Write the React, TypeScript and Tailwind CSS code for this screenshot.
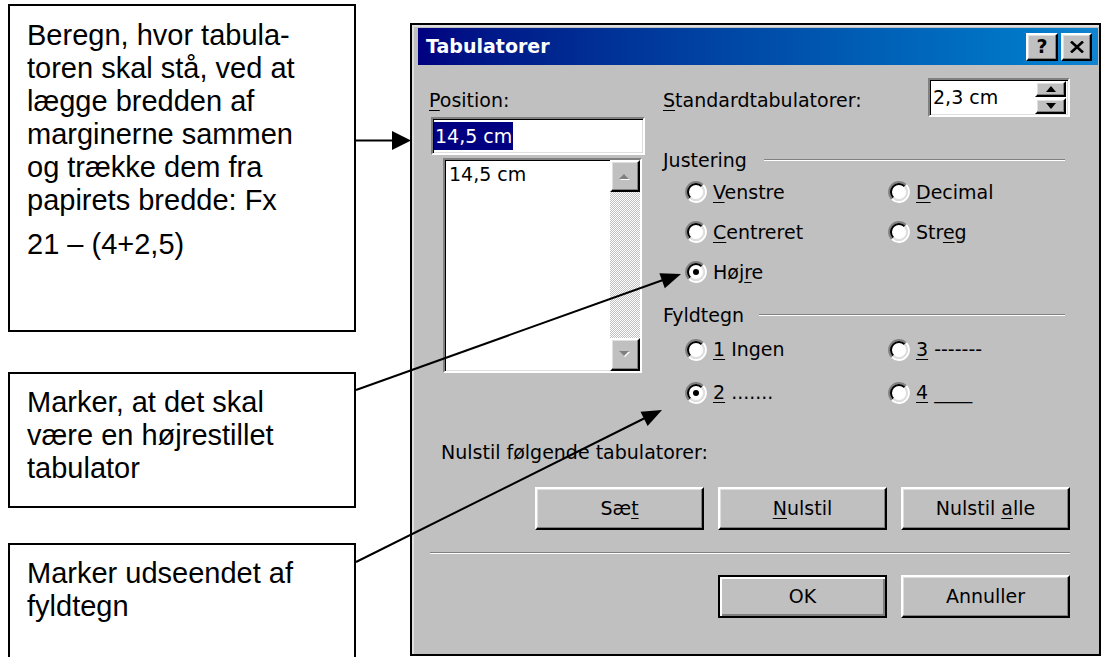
import React from 'react';

const raised =
  'border-2 border-t-white border-l-white border-r-black border-b-black bg-[#c0c0c0] shadow-[inset_-1px_-1px_#808080,inset_1px_1px_#dfdfdf]';
const sunken =
  'border-2 border-t-[#808080] border-l-[#808080] border-r-white border-b-white shadow-[inset_1px_1px_#000,inset_-1px_-1px_#dfdfdf]';

function Radio({ checked }: { checked?: boolean }) {
  return (
    <svg width="22" height="22" viewBox="0 0 22 22" className="shrink-0">
      <circle cx="11" cy="11" r="8" fill="#fff" />
      <path d="M3.93 18.07 A10 10 0 0 1 18.07 3.93" stroke="#808080" strokeWidth="2" fill="none" />
      <path d="M5.34 16.66 A8 8 0 0 1 16.66 5.34" stroke="#000" strokeWidth="2" fill="none" />
      <path d="M18.07 3.93 A10 10 0 0 1 3.93 18.07" stroke="#fff" strokeWidth="2" fill="none" />
      <path d="M16.66 5.34 A8 8 0 0 1 5.34 16.66" stroke="#dfdfdf" strokeWidth="2" fill="none" />
      {checked && <circle cx="11" cy="11" r="3" fill="#000" />}
    </svg>
  );
}

function Option({ checked, children }: { checked?: boolean; children: React.ReactNode }) {
  return (
    <div className="flex items-center gap-[6px]">
      <Radio checked={checked} />
      <span className="whitespace-pre">{children}</span>
    </div>
  );
}

const U = ({ children }: { children: React.ReactNode }) => (
  <span className="underline underline-offset-[3px]">{children}</span>
);

function GroupHeader({ label, gap }: { label: string; gap: string }) {
  return (
    <div className="flex h-[22px] items-center">
      <span>{label}</span>
      <div className={`flex-1 border-t border-b border-t-[#808080] border-b-white ${gap}`} />
    </div>
  );
}

function Btn({ children, isDefault }: { children: React.ReactNode; isDefault?: boolean }) {
  return (
    <div
      className={
        isDefault
          ? 'flex h-[43px] w-[169px] items-center justify-center border-2 border-black bg-[#c0c0c0] shadow-[inset_2px_2px_#fff,inset_-2px_-2px_#808080]'
          : `flex h-[43px] w-[169px] items-center justify-center ${raised}`
      }
    >
      <span className="whitespace-pre">{children}</span>
    </div>
  );
}

function ScrollArrow({ up }: { up?: boolean }) {
  return (
    <svg width="14" height="9" viewBox="0 0 14 9">
      {up ? (
        <>
          <polygon points="2,8 7,3 12,8" fill="#fff" />
          <polygon points="1,7 6,2 11,7" fill="#808080" />
        </>
      ) : (
        <>
          <polygon points="2,2 7,7 12,2" fill="#fff" />
          <polygon points="1,1 6,6 11,1" fill="#808080" />
        </>
      )}
    </svg>
  );
}

function Dialog() {
  return (
    <div className="ml-[54px] mt-[23px] h-[633px] w-[691px] shrink-0 border-2 border-black bg-[#c0c0c0] pl-[6px] pr-[1px] pt-[3px] font-['DejaVu_Sans',sans-serif] text-[19px] text-black shadow-[inset_2px_2px_#dfdfdf]">
      {/* title bar */}
      <div className="flex h-[37px] items-center justify-between bg-gradient-to-r from-[#000080] to-[#1084d0] pl-[8px] pr-[6px]">
        <span className="font-bold text-white">Tabulatorer</span>
        <div className="flex gap-[3px]">
          <div className={`flex h-[28px] w-[32px] items-center justify-center font-bold ${raised}`}>?</div>
          <div className={`flex h-[28px] w-[31px] items-center justify-center ${raised}`}>
            <svg width="14" height="12" viewBox="0 0 14 12">
              <path d="M1 0.5 L13 11.5 M13 0.5 L1 11.5" stroke="#000" strokeWidth="2.6" />
            </svg>
          </div>
        </div>
      </div>

      {/* body */}
      <div className="flex h-[350px]">
        <div className="flex w-[245px] flex-col pl-[11px]">
          <div className="mt-[24px] h-[22px] leading-[22px]">
            <U>P</U>osition:
          </div>
          <div className={`ml-[2px] mt-[6px] flex h-[38px] w-[214px] items-center bg-white pl-[1px] ${sunken}`}>
            <span className="h-[28px] bg-[#000080] px-[1px] leading-[28px] text-white">14,5 cm</span>
          </div>
          <div className={`ml-[14px] mt-[3px] flex h-[215px] w-[199px] bg-white ${sunken}`}>
            <div className="flex-1 pl-[4px] pt-[3px] leading-[22px]">14,5 cm</div>
            <div className="flex w-[30px] flex-col bg-[repeating-conic-gradient(#c0c0c0_0%_25%,#ffffff_0%_50%)] bg-[length:2px_2px]">
              <div className={`flex h-[32px] items-center justify-center ${raised}`}>
                <ScrollArrow up />
              </div>
              <div className="flex-1" />
              <div className={`flex h-[33px] items-center justify-center ${raised}`}>
                <ScrollArrow />
              </div>
            </div>
          </div>
        </div>

        <div className="flex flex-1 flex-col pr-[28px]">
          <div className="mt-[13px] flex h-[39px] items-center justify-between">
            <span className="mt-[5px]">
              <U>S</U>tandardtabulatorer:
            </span>
            <div className={`flex h-[39px] w-[142px] items-center bg-white pl-[3px] pr-[2px] ${sunken}`}>
              <span className="flex-1">2,3 cm</span>
              <div className="flex h-full flex-col justify-center gap-px py-[1px]">
                <div className={`flex h-[17px] w-[31px] items-center justify-center ${raised}`}>
                  <svg width="10" height="6" viewBox="0 0 10 6">
                    <polygon points="0,6 5,0 10,6" fill="#000" />
                  </svg>
                </div>
                <div className={`flex h-[17px] w-[31px] items-center justify-center ${raised}`}>
                  <svg width="10" height="6" viewBox="0 0 10 6">
                    <polygon points="0,0 5,6 10,0" fill="#000" />
                  </svg>
                </div>
              </div>
            </div>
          </div>

          <div className="mt-[32px] pr-[5px]">
            <GroupHeader label="Justering" gap="ml-[17px]" />
          </div>
          <div className="mt-[1px] grid grid-cols-[203px_1fr] pl-[22px]">
            <div className="flex h-[40px] items-center">
              <Option>
                <U>V</U>enstre
              </Option>
            </div>
            <div className="flex h-[40px] items-center">
              <Option>
                <U>D</U>ecimal
              </Option>
            </div>
            <div className="flex h-[40px] items-center">
              <Option>
                <U>C</U>entreret
              </Option>
            </div>
            <div className="flex h-[40px] items-center">
              <Option>
                Str<U>e</U>g
              </Option>
            </div>
            <div className="flex h-[40px] items-center">
              <Option checked>
                Høj<U>r</U>e
              </Option>
            </div>
            <div className="h-[40px]" />
          </div>

          <div className="mt-[12px] pr-[5px]">
            <GroupHeader label="Fyldtegn" gap="ml-[15px]" />
          </div>
          <div className="mt-[2px] grid grid-cols-[203px_1fr] pl-[22px]">
            <div className="flex h-[43px] items-center">
              <Option>
                <U>1</U> Ingen
              </Option>
            </div>
            <div className="flex h-[43px] items-center">
              <Option>
                <U>3</U> -------
              </Option>
            </div>
            <div className="flex h-[43px] items-center">
              <Option checked>
                <U>2</U> .......
              </Option>
            </div>
            <div className="flex h-[43px] items-center">
              <Option>
                <U>4</U> ____
              </Option>
            </div>
          </div>
        </div>
      </div>

      {/* bottom */}
      <div className="ml-[23px] mt-[26px] h-[22px] leading-[22px]">Nulstil følgende tabulatorer:</div>
      <div className="mt-[24px] flex justify-end gap-[14px] pr-[28px]">
        <Btn>
          Sæ<U>t</U>
        </Btn>
        <Btn>
          <U>N</U>ulstil
        </Btn>
        <Btn>
          {'Nulstil '}
          <U>a</U>lle
        </Btn>
      </div>
      <div className="ml-[12px] mr-[28px] mt-[22px] border-t border-b border-t-[#808080] border-b-white" />
      <div className="mt-[21px] flex justify-end gap-[14px] pr-[28px]">
        <Btn isDefault>OK</Btn>
        <Btn>Annuller</Btn>
      </div>
    </div>
  );
}

export default function App() {
  return (
    <div className="relative flex h-[657px] w-[1101px] overflow-hidden bg-white">
      <div className="flex w-[356px] shrink-0 flex-col pl-[8px] pt-[4px] font-['Liberation_Sans',Arial,sans-serif] text-[29px] leading-[33px] text-black">
        <div className="h-[328px] shrink-0 border-2 border-black pl-[17px] pt-[13px]">
          <p>
            Beregn, hvor tabula-
            <br />
            toren skal stå, ved at
            <br />
            lægge bredden af
            <br />
            marginerne sammen
            <br />
            og trække dem fra
            <br />
            papirets bredde: Fx
          </p>
          <p className="mt-[11px]">21 – (4+2,5)</p>
        </div>
        <div className="mt-[40px] h-[136px] shrink-0 border-2 border-black pl-[17px] pt-[12px]">
          Marker, at det skal
          <br />
          være en højrestillet
          <br />
          tabulator
        </div>
        <div className="mt-[35px] h-[140px] shrink-0 border-2 border-black pl-[17px] pt-[12px]">
          Marker udseendet af
          <br />
          fyldtegn
        </div>
      </div>

      <Dialog />

      <svg className="pointer-events-none absolute left-0 top-0" width="1101" height="657">
        <line x1="356" y1="140.5" x2="394" y2="140.5" stroke="#000" strokeWidth="2" />
        <polygon points="392,131 411,140.5 392,150" fill="#000" />
        <line x1="356" y1="390" x2="663" y2="280" stroke="#000" strokeWidth="2" />
        <polygon points="681,274 664.8,288.2 659.4,273.2" fill="#000" />
        <line x1="356" y1="562" x2="645" y2="418" stroke="#000" strokeWidth="2" />
        <polygon points="662,410 647.6,426 640.5,411.7" fill="#000" />
      </svg>
    </div>
  );
}
